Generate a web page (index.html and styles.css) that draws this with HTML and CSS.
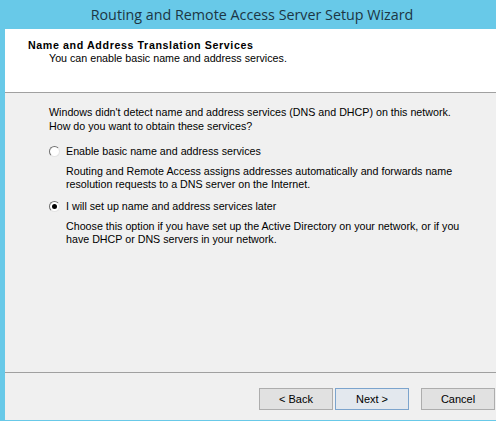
FILE: index.html
```html
<!DOCTYPE html>
<html lang="en">
<head>
    <meta charset="UTF-8">
    <title>Routing and Remote Access Server Setup Wizard</title>
    <link rel="stylesheet" href="styles.css">
</head>
<body>
    <div class="window">
        <div class="titlebar">Routing and Remote Access Server Setup Wizard</div>

        <div class="page-header">
            <div class="page-title">Name and Address Translation Services</div>
            <div class="page-subtitle">You can enable basic name and address services.</div>
        </div>

        <div class="page-body">
            <p class="intro">
                Windows didn't detect name and address services (DNS and DHCP) on this network.<br>
                How do you want to obtain these services?
            </p>

            <div class="option">
                <label class="option-label"><span class="radio"></span>Enable basic name and address services</label>
                <p class="option-desc">
                    Routing and Remote Access assigns addresses automatically and forwards name<br>
                    resolution requests to a DNS server on the Internet.
                </p>
            </div>

            <div class="option">
                <label class="option-label"><span class="radio checked"></span>I will set up name and address services later</label>
                <p class="option-desc">
                    Choose this option if you have set up the Active Directory on your network, or if you<br>
                    have DHCP or DNS servers in your network.
                </p>
            </div>
        </div>

        <div class="page-footer">
            <button class="btn">&lt; Back</button>
            <button class="btn btn-default">Next &gt;</button>
            <button class="btn btn-cancel">Cancel</button>
        </div>
    </div>
</body>
</html>
```

FILE: styles.css
```css
:root {
    --frame: #68c9e8;
    --title-text: #1c3644;
    --panel: #f0f0f0;
    --etch: #a0a0a0;
    --text: #000000;
}

html, body {
    margin: 0;
    height: 100%;
}

body {
    font-family: "Liberation Sans", Arial, sans-serif;
    font-size: 10.7px;
    color: var(--text);
    background: var(--frame);
}

.window {
    height: 100%;
    box-sizing: border-box;
    display: flex;
    flex-direction: column;
    border-left: 5px solid var(--frame);
    border-bottom: 1px solid var(--frame);
}

.titlebar {
    height: 29px;
    margin-left: -5px;
    padding-left: 8px;
    background: var(--frame);
    color: var(--title-text);
    font-family: "Open Sans", "Noto Sans", sans-serif;
    font-size: 14.3px;
    line-height: 29px;
    text-align: center;
}

.page-header {
    height: 64px;
    background: #ffffff;
    border-bottom: 1px solid var(--etch);
    padding: 10px 0 0 23px;
    box-sizing: border-box;
}

.page-title {
    font-weight: bold;
    letter-spacing: 0.6px;
    line-height: 13px;
}

.page-subtitle {
    padding-left: 21px;
    line-height: 13px;
}

.page-body {
    flex: 1;
    background: var(--panel);
    padding: 12px 0 0 44px;
    border-bottom: 1px solid var(--etch);
}

.intro {
    margin: 0 0 11px;
    line-height: 14px;
}

.option {
    margin-bottom: 8px;
}

.option-label {
    display: flex;
    align-items: center;
    line-height: 14px;
}

/* classic radio: dark top-left rim, light bottom-right */
.radio {
    width: 11px;
    height: 11px;
    margin-right: 6px;
    border-radius: 50%;
    box-sizing: border-box;
    border: 1px solid #e4e4e4;
    border-top-color: #707070;
    border-left-color: #707070;
    background: #ffffff;
    position: relative;
}

.radio.checked::after {
    content: "";
    position: absolute;
    left: 2px;
    top: 2px;
    width: 5px;
    height: 5px;
    border-radius: 50%;
    background: #000000;
}

.option-desc {
    margin: 7px 0 0 17px;
    line-height: 13px;
}

.page-footer {
    height: 47px;
    box-sizing: border-box;
    background: var(--panel);
    display: flex;
    padding: 15px 0 0 254px;
}

.btn {
    width: 74px;
    height: 22px;
    padding: 0;
    font-family: inherit;
    font-size: 11px;
    color: var(--text);
    background: #e1e1e1;
    border: 1px solid #adadad;
    border-radius: 0;
}

.btn-default {
    margin-left: 2px;
    border-color: #7ca4cd;
    background: #e3e8ee;
}

.btn-cancel {
    margin-left: 12px;
}
```
